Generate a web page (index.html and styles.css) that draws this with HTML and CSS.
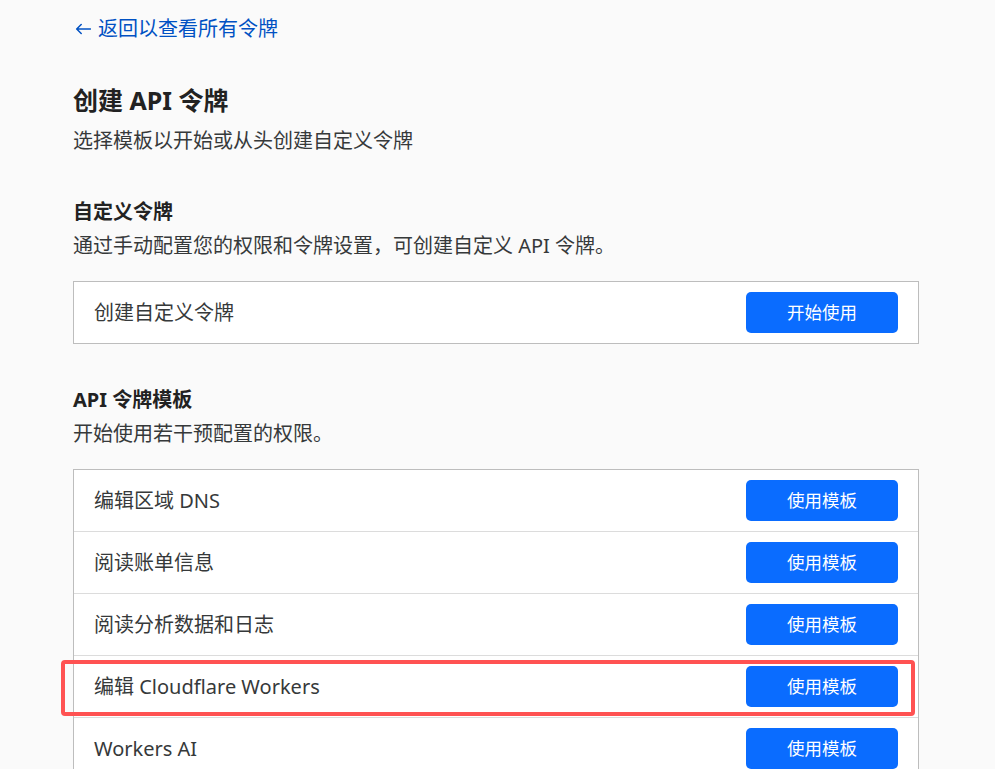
FILE: index.html
```html
<!DOCTYPE html>
<html lang="zh-CN">
<head>
<meta charset="utf-8">
<title>创建 API 令牌</title>
<link rel="stylesheet" href="styles.css">
</head>
<body>
<main class="page">
  <a class="back-link" href="#">
    <svg class="back-arrow" viewBox="0 0 16 12" width="16" height="12" aria-hidden="true">
      <path d="M15.5 6H1.8M6.2 1.5L1.7 6l4.5 4.5" fill="none" stroke="currentColor" stroke-width="1.5" stroke-linecap="round" stroke-linejoin="round"/>
    </svg>
    <span>返回以查看所有令牌</span>
  </a>

  <h1 class="page-title">创建 API 令牌</h1>
  <p class="page-subtitle">选择模板以开始或从头创建自定义令牌</p>

  <section class="section">
    <h2 class="section-title">自定义令牌</h2>
    <p class="section-desc">通过手动配置您的权限和令牌设置，可创建自定义 API 令牌。</p>
    <div class="card">
      <div class="row">
        <span class="row-label">创建自定义令牌</span>
        <button class="btn" type="button">开始使用</button>
      </div>
    </div>
  </section>

  <section class="section">
    <h2 class="section-title">API 令牌模板</h2>
    <p class="section-desc">开始使用若干预配置的权限。</p>
    <div class="card">
      <div class="row">
        <span class="row-label">编辑区域 DNS</span>
        <button class="btn" type="button">使用模板</button>
      </div>
      <div class="row">
        <span class="row-label">阅读账单信息</span>
        <button class="btn" type="button">使用模板</button>
      </div>
      <div class="row">
        <span class="row-label">阅读分析数据和日志</span>
        <button class="btn" type="button">使用模板</button>
      </div>
      <div class="row row-marked">
        <span class="row-label">编辑 Cloudflare Workers</span>
        <button class="btn" type="button">使用模板</button>
        <span class="mark-box"></span>
      </div>
      <div class="row">
        <span class="row-label">Workers AI</span>
        <button class="btn" type="button">使用模板</button>
      </div>
    </div>
  </section>
</main>
</body>
</html>
```

FILE: styles.css
```css
html, body {
  margin: 0;
  padding: 0;
}

body {
  background: #fafafa;
  color: #313131;
  font-family: "Noto Sans", "Noto Sans CJK SC", sans-serif;
  font-size: 20px;
  line-height: 30px;
  height: 769px;
  overflow: hidden;
}

.page {
  width: 846px;
  margin-left: 73px;
  padding-top: 14px;
}

.back-link {
  display: flex;
  align-items: center;
  gap: 7px;
  color: #0051c3;
  text-decoration: none;
  height: 30px;
  width: max-content;
}

.back-arrow {
  display: block;
  margin-left: 2px;
}

.page-title {
  margin: 38px 0 0;
  font-size: 25px;
  line-height: 36px;
  font-weight: 700;
  color: #222;
}

.page-subtitle {
  margin: 8px 0 0;
  color: #36393a;
}

.section {
  margin-top: 41px;
}

.section-title {
  margin: 0;
  font-size: 20px;
  line-height: 30px;
  font-weight: 700;
  color: #222;
}

.section-desc {
  margin: 4px 0 0;
  color: #36393a;
}

.card {
  margin-top: 20px;
  background: #fff;
  border: 1px solid #bdbdbd;
}

.row {
  position: relative;
  display: flex;
  align-items: center;
  justify-content: space-between;
  height: 62px;
  padding: 0 20px;
  box-sizing: border-box;
  border-bottom: 1px solid #dcdcdc;
}

.row:last-child {
  border-bottom: none;
  height: 61px;
}

.row-label {
  color: #36393a;
}

.btn {
  width: 152px;
  height: 41px;
  border: none;
  border-radius: 5px;
  background: #0a6cff;
  color: #fff;
  font-family: inherit;
  font-size: 17.5px;
  line-height: 41px;
  padding: 0;
  cursor: pointer;
}

/* highlight frame drawn over the Workers row */
.mark-box {
  position: absolute;
  left: -13px;
  top: 4px;
  width: 854px;
  height: 56px;
  box-sizing: border-box;
  border: 4px solid #ff5252;
  border-radius: 4px;
  pointer-events: none;
}
```
